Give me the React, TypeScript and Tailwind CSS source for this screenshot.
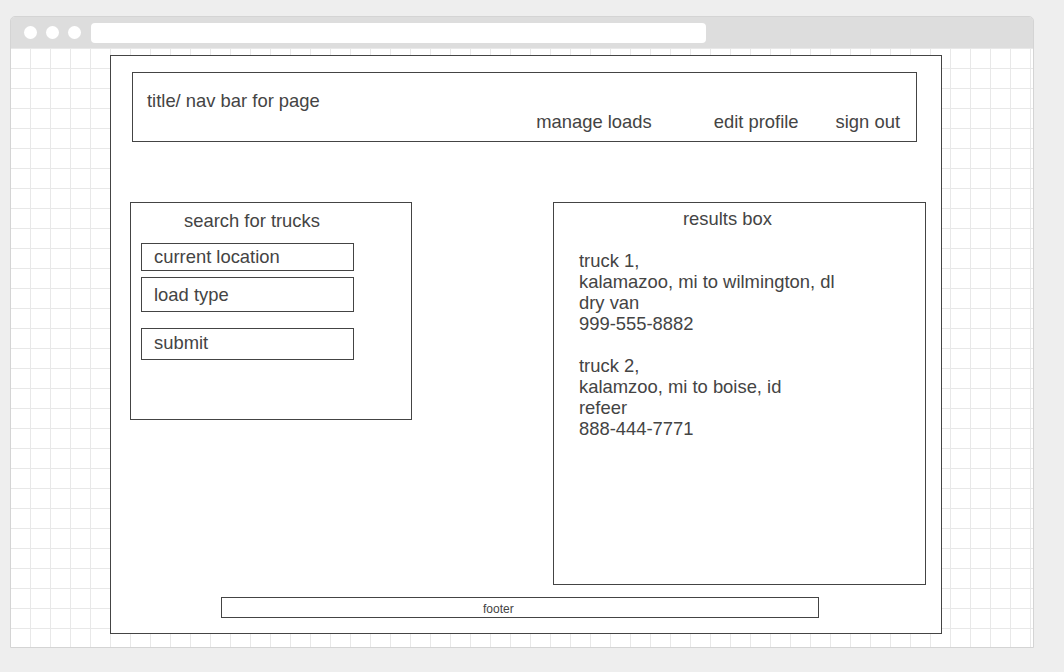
import React from 'react';

const truckResults = [
  { name: 'truck 1,', route: 'kalamazoo, mi to wilmington, dl', load: 'dry van', phone: '999-555-8882' },
  { name: 'truck 2,', route: 'kalamzoo, mi to boise, id', load: 'refeer', phone: '888-444-7771' },
];

export default function App() {
  return (
    <div className="w-[1064px] h-[672px] bg-[#eeeeee] pt-[16px] pl-[10px] font-['Liberation_Sans',Arial,sans-serif] text-[#444444]">
      {/* browser window */}
      <div className="w-[1024px] h-[632px] border border-[#d4d4d4] rounded-t-[5px] flex flex-col overflow-hidden">
        <div className="h-[31px] bg-[#dddddd] flex items-center pl-[13px] shrink-0">
          <div className="flex gap-[9px]">
            <span className="w-[13px] h-[13px] rounded-full bg-white" />
            <span className="w-[13px] h-[13px] rounded-full bg-white" />
            <span className="w-[13px] h-[13px] rounded-full bg-white" />
          </div>
          <div className="ml-[10px] w-[615px] h-[20px] bg-white rounded-[4px]" />
        </div>

        <div className="h-[599px] bg-white bg-[linear-gradient(to_right,#e8e8e8_1px,transparent_1px),linear-gradient(to_bottom,#e8e8e8_1px,transparent_1px)] bg-[size:20px_20px] bg-[position:-1px_0px] pt-[7px] pl-[99px]">
          {/* page */}
          <div className="w-[832px] h-[579px] bg-white border border-[#444444] flex flex-col">
            {/* nav */}
            <div className="ml-[21px] mt-[16px] w-[785px] h-[70px] border border-[#444444] flex flex-col pl-[14px] pt-[17px] pr-[16px] text-[18.4px] leading-[21px]">
              <div>title/ nav bar for page</div>
              <div className="flex justify-end">
                <span>manage loads</span>
                <span className="ml-[62px]">edit profile</span>
                <span className="ml-[37px]">sign out</span>
              </div>
            </div>

            <div className="flex items-start mt-[60px] ml-[19px]">
              {/* search */}
              <div className="w-[282px] h-[218px] border border-[#444444] flex flex-col text-[18.4px] leading-[21px]">
                <div className="pl-[53px] pt-[7px]">search for trucks</div>
                <div className="ml-[10px] mt-[12px] w-[213px] h-[28px] border border-[#444444] pl-[12px] pt-[2px]">
                  current location
                </div>
                <div className="ml-[10px] mt-[6px] w-[213px] h-[35px] border border-[#444444] pl-[12px] pt-[6px]">
                  load type
                </div>
                <div className="ml-[10px] mt-[16px] w-[213px] h-[32px] border border-[#444444] pl-[12px] pt-[3px]">
                  submit
                </div>
              </div>

              {/* results */}
              <div className="ml-[141px] w-[373px] h-[383px] border border-[#444444] flex flex-col text-[18.4px] leading-[21px]">
                <div className="pl-[129px] pt-[5px]">results box</div>
                <div className="pl-[25px] mt-[21px] flex flex-col gap-[21px]">
                  {truckResults.map((t) => (
                    <div key={t.phone}>
                      <div>{t.name}</div>
                      <div>{t.route}</div>
                      <div>{t.load}</div>
                      <div>{t.phone}</div>
                    </div>
                  ))}
                </div>
              </div>
            </div>

            {/* footer */}
            <div className="ml-[110px] mt-[12px] w-[598px] h-[21px] border border-[#444444] text-[12px] leading-[14px] pl-[261px] pt-[4px]">
              footer
            </div>
          </div>
        </div>
      </div>
    </div>
  );
}
